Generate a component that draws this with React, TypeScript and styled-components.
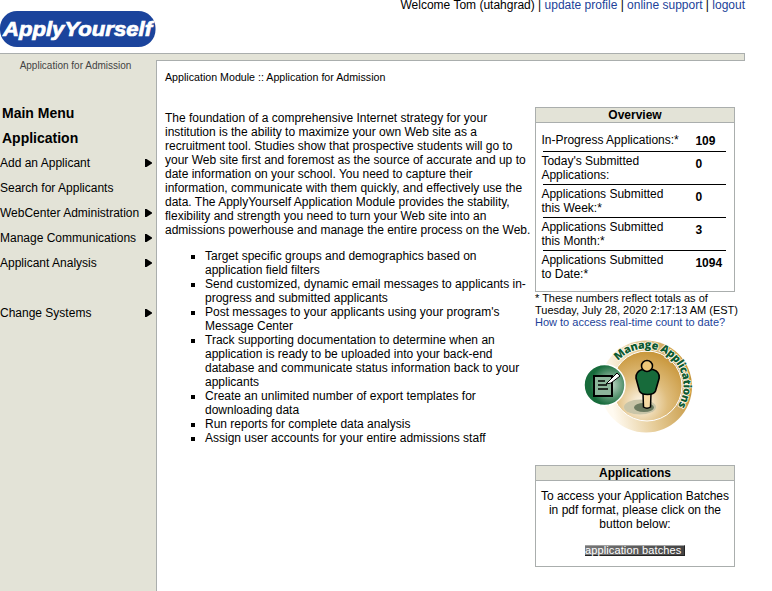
import React from "react";
import styled, { createGlobalStyle } from "styled-components";

const Global = createGlobalStyle`
  * { box-sizing: border-box; }
  body { margin: 0; background: #fff; color: #000; font: 12px/14px "Liberation Sans", Arial, sans-serif; }
  a { color: #213f99; text-decoration: none; }
`;
const Page = styled.div`width: 772px; height: 591px; overflow: hidden; display: flex; flex-direction: column;`;
const Header = styled.header`width: 745px; height: 53px; flex: none; display: flex; justify-content: space-between; align-items: flex-start;`;
const LogoSvg = styled.svg`display: block; margin-top: 11px;`;
const Account = styled.div`line-height: 10px; white-space: pre;`;
const Band = styled.div`width: 745px; height: 7px; flex: none; background: #e3e3d7; border: solid #aaaead; border-width: 1px 1px 0 0;`;
const Body = styled.div`flex: 1; display: flex; min-height: 0;`;
const Sidebar = styled.nav`width: 156px; background: #e3e3d7; flex: none;`;
const Caption = styled.div`height: 41px; text-align: center; font-size: 10px; line-height: 12px; color: #444; padding-right: 5px;`;
const MenuHeading = styled.div`height: 25px; padding-left: 2px; font-size: 14px; line-height: 25px; font-weight: bold;`;
const MenuItem = styled.a<{ $gap?: boolean }>`
  && { color: #000; }
  display: flex; align-items: center; justify-content: space-between; height: 25px; padding: 0 4px 2px 0; white-space: nowrap;
  margin-top: ${(p) => (p.$gap ? 25 : 0)}px;
`;
const Main = styled.main`width: 589px; border: solid #aaaead; border-width: 1px 0 0 1px; padding-left: 8px;`;
const Crumb = styled.div`height: 50px; padding-top: 10px; font-size: 10.667px; line-height: 13px;`;
const Columns = styled.div`display: flex; white-space: nowrap;`;
const Copy = styled.div`width: 370px; flex: none;`;
const Bullets = styled.ul`margin: 12px 0 0; padding: 0 0 0 40px; list-style: square;`;
const Side = styled.aside`width: 210px; flex: none; margin-top: -4px;`;
const Card = styled.section`width: 200px; border: 1px solid #aaaead;`;
const CardTitle = styled.h2`margin: 0; height: 15px; background: #e3e3d7; border-bottom: 1px solid #aaaead; font-size: 12px; line-height: 14px; text-align: center;`;
const Stats = styled.div`height: 168px; padding: 7px 8px 0 5.4px;`;
const StatRow = styled.div<{ $single?: boolean; $last?: boolean }>`
  display: flex; height: ${(p) => (p.$single ? 22 : 33)}px; padding-top: ${(p) => (p.$single ? 3 : 2)}px;
  background: ${(p) => (p.$last ? "none" : "linear-gradient(#000, #000) 1.6px 100% / 100% 1px no-repeat")};
`;
const StatLabel = styled.div`width: 154px; flex: none;`;
const StatValue = styled.div<{ $offset: number }>`font-weight: bold; padding-top: ${(p) => p.$offset}px;`;
const Note = styled.div`font-size: 11px; line-height: 12px;`;
const Badge = styled.svg`display: block; margin: 11px 0 0 47px;`;
const BatchCard = styled(Card)`margin-top: 30px; height: 102px; text-align: center;`;
const BatchText = styled.div`padding-top: 8px;`;
const BatchButton = styled.button`
  display: block; width: 100px; height: 11px; margin: 14px auto 0 49px; padding: 0; border: solid; border-width: 1px 1px 1px 0;
  border-color: #a0a0a0 #222 #222 #a0a0a0; background: linear-gradient(90deg, #777, #444); color: #fff;
  font: 11px/9px "Liberation Sans", Arial, sans-serif; letter-spacing: 0.12px; text-align: left; white-space: nowrap;
`;

const menu = [
  { label: "Add an Applicant", arrow: true },
  { label: "Search for Applicants" },
  { label: "WebCenter Administration", arrow: true },
  { label: "Manage Communications", arrow: true },
  { label: "Applicant Analysis", arrow: true },
  { label: "Change Systems", arrow: true, gap: true },
];
const intro = [
  "The foundation of a comprehensive Internet strategy for your",
  "institution is the ability to maximize your own Web site as a",
  "recruitment tool. Studies show that prospective students will go to",
  "your Web site first and foremost as the source of accurate and up to",
  "date information on your school. You need to capture their",
  "information, communicate with them quickly, and effectively use the",
  "data. The ApplyYourself Application Module provides the stability,",
  "flexibility and strength you need to turn your Web site into an",
  "admissions powerhouse and manage the entire process on the Web.",
];
const features = [
  ["Target specific groups and demographics based on", "application field filters"],
  ["Send customized, dynamic email messages to applicants in-", "progress and submitted applicants"],
  ["Post messages to your applicants using your program's", "Message Center"],
  ["Track supporting documentation to determine when an", "application is ready to be uploaded into your back-end", "database and communicate status information back to your", "applicants"],
  ["Create an unlimited number of export templates for", "downloading data"],
  ["Run reports for complete data analysis"],
  ["Assign user accounts for your entire admissions staff"],
];
const stats = [
  { label: ["In-Progress Applications:*"], value: "109" },
  { label: ["Today's Submitted", "Applications:"], value: "0" },
  { label: ["Applications Submitted", "this Week:*"], value: "0" },
  { label: ["Applications Submitted", "this Month:*"], value: "3" },
  { label: ["Applications Submitted", "to Date:*"], value: "1094" },
];

const Lines = ({ lines }: { lines: string[] }) => (
  <>{lines.map((l, i) => <React.Fragment key={l}>{i > 0 && <br />}{l}</React.Fragment>)}</>
);

const Logo = () => (
  <LogoSvg width="156" height="36" viewBox="0 0 156 36">
    <rect width="155.5" height="36" rx="17" fill="#1b449c" />
    <text x="3" y="24.5" textLength="149" lengthAdjust="spacingAndGlyphs" fill="#fff" stroke="#fff" strokeWidth=".7" fontFamily="Liberation Sans" fontWeight="bold" fontStyle="italic" fontSize="19.5">ApplyYourself</text>
  </LogoSvg>
);

const ManageBadge = () => (
  <Badge width="112" height="96" viewBox="582 339 112 96">
    <defs>
      <linearGradient id="ring" x1=".1" y1=".6" x2="1" y2=".4"><stop offset="0" stopColor="#fffaf0" /><stop offset=".45" stopColor="#e6cc98" /><stop offset="1" stopColor="#c3933a" /></linearGradient>
      <radialGradient id="disc" cx=".42" cy=".75" r=".75"><stop offset="0" stopColor="#fffaf0" /><stop offset=".5" stopColor="#dfbd7d" /><stop offset="1" stopColor="#c8963a" /></radialGradient>
      <radialGradient id="green" cx=".65" cy=".5"><stop offset="0" stopColor="#c5d9cb" /><stop offset="1" stopColor="#176b3b" /></radialGradient>
      <path id="arc" d="M618.13 360.91 A37.5 37.5 0 0 1 676.83 407.35" />
    </defs>
    <circle cx="646" cy="386.5" r="46" fill="url(#ring)" />
    <circle cx="647" cy="386" r="35" fill="url(#disc)" stroke="#fff" />
    <text fill="#0e5a32" stroke="#fff8e8" strokeWidth="1.6" paintOrder="stroke" fontFamily="Open Sans" fontWeight="800" fontSize="11"><textPath href="#arc" textLength="111">Manage Applications</textPath></text>
    <ellipse cx="640" cy="407" rx="16" ry="7.5" fill="#c9c5a8" /><ellipse cx="644" cy="407.5" rx="10" ry="4.5" fill="#6c7b60" />
    <path d="M643 393h8l-.5 14q-3.500 2.500-7 0z" fill="#f5d9a4" stroke="#000" strokeWidth="1.5" />
    <path d="M642 369.500q-6.500 2.500-6 8.500l3.500 13q1.500 3.500 8 3.500t8-3.500l3.700-13q.8-6-6.200-8.500z" fill="#176b3b" stroke="#000" strokeWidth="1.6" />
    <circle cx="647" cy="366" r="5.500" fill="#edc678" stroke="#000" strokeWidth="1.5" />
    <circle cx="604.500" cy="385" r="20.500" fill="url(#green)" stroke="#fff" strokeWidth="1.5" />
    <path d="M594 376h18v20h-18z" fill="#8cb59a" stroke="#000" strokeWidth="2" />
    <path d="M598 381h7m-7 4h9m-9 4h10" stroke="#000" strokeWidth="1.4" />
    <path d="m608 382 9-9 3 3-9 7-5 1z" fill="#fff" stroke="#000" />
  </Badge>
);

export default function App() {
  return (
    <Page>
      <Global />
      <Header>
        <Logo />
        <Account>Welcome Tom (utahgrad) | <a href="#profile">update profile</a> | <a href="#support">online support</a> | <a href="#logout">logout</a></Account>
      </Header>
      <Band />
      <Body>
        <Sidebar>
          <Caption>Application for Admission</Caption>
          <MenuHeading>Main Menu</MenuHeading>
          <MenuHeading>Application</MenuHeading>
          {menu.map((m) => (
            <MenuItem key={m.label} href="#menu" $gap={m.gap}>
              {m.label}
              {m.arrow && <svg width="7" height="8"><path d="M0 0h1.500L7 3.500v1L1.500 8H0z" /></svg>}
            </MenuItem>
          ))}
        </Sidebar>
        <Main>
          <Crumb>Application Module :: Application for Admission</Crumb>
          <Columns>
            <Copy>
              <Lines lines={intro} />
              <Bullets>{features.map((f) => <li key={f[0]}><Lines lines={f} /></li>)}</Bullets>
            </Copy>
            <Side>
              <Card>
                <CardTitle>Overview</CardTitle>
                <Stats>
                  {stats.map((s, i) => (
                    <StatRow key={i} $single={i === 0} $last={i === 4}>
                      <StatLabel><Lines lines={s.label} /></StatLabel>
                      <StatValue $offset={i === 0 ? 1 : 3}>{s.value}</StatValue>
                    </StatRow>
                  ))}
                </Stats>
              </Card>
              <Note>* These numbers reflect totals as of<br />Tuesday, July 28, 2020 2:17:13 AM (EST)<br /><a href="#count">How to access real-time count to date?</a></Note>
              <ManageBadge />
              <BatchCard>
                <CardTitle>Applications</CardTitle>
                <BatchText>To access your Application Batches<br />in pdf format, please click on the<br />button below:</BatchText>
                <BatchButton>application batches</BatchButton>
              </BatchCard>
            </Side>
          </Columns>
        </Main>
      </Body>
    </Page>
  );
}
